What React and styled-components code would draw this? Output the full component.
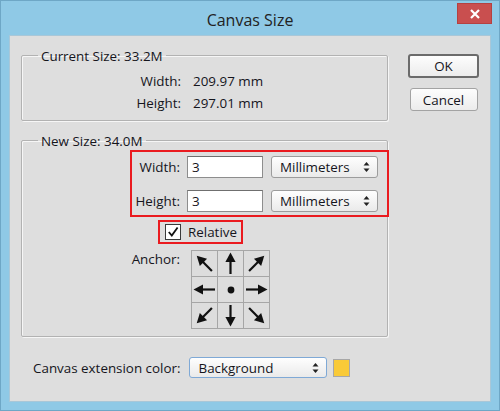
import React from 'react';
import styled, { createGlobalStyle } from 'styled-components';

const GlobalStyle = createGlobalStyle`
  html, body { margin: 0; padding: 0; }
  body {
    width: 500px;
    height: 411px;
    overflow: hidden;
    font-family: "Open Sans", "Noto Sans", sans-serif;
    font-size: 13.4px;
    color: #15151c;
  }
  * { box-sizing: border-box; }
`;

const Window = styled.div`
  width: 500px;
  height: 411px;
  background: #8fc9e6;
  border: 1px solid #6ea7c6;
  padding: 0 8px 8px;
  display: flex;
  flex-direction: column;
`;

const TitleBar = styled.div`
  height: 34px;
  display: grid;
  grid-template-columns: 1fr auto 1fr;
  align-items: start;
`;

const Title = styled.div`
  grid-column: 2;
  font-size: 16px;
  line-height: 20px;
  margin-top: 9px;
  color: #222;
`;

const CloseButton = styled.div`
  grid-column: 3;
  justify-self: end;
  margin: 2px -1px 0 0;
  width: 35px;
  height: 21px;
  background: #c94f4f;
  border: 1px solid #b54141;
  display: flex;
  align-items: center;
  justify-content: center;
`;

const Body = styled.div`
  flex: 1;
  background: #dedede;
  border: 1px solid #a9c7d8;
  display: flex;
  gap: 20px;
  padding: 9px 12px 0 11px;
`;

const LeftColumn = styled.div`
  width: 367px;
  display: flex;
  flex-direction: column;
  gap: 9px;
`;

const RightColumn = styled.div`
  width: 71px;
  display: flex;
  flex-direction: column;
  align-items: center;
  gap: 10px;
  padding-top: 9px;
`;

const Button = styled.button`
  font-family: inherit;
  font-size: 13.4px;
  color: #15151c;
  width: ${p => (p.$default ? 71 : 68)}px;
  height: ${p => (p.$default ? 24 : 23)}px;
  padding: 0;
  border-radius: 3px;
  border: ${p => (p.$default ? '2px solid #6b6b6b' : '1px solid #a3a3a3')};
  background: linear-gradient(#fdfdfd, #ececec);
  line-height: 18px;
`;

const Group = styled.fieldset`
  margin: 0;
  min-width: 0;
  border: 1px solid #b2b2b2;
  box-shadow: inset 1px 1px 0 #f6f6f6, 1px 1px 0 #f6f6f6;
  border-radius: 2px;
  padding: ${p => p.$pad};
`;

const Legend = styled.legend`
  margin-left: 16px;
  padding: 3px 3px 0;
  line-height: 17px;
`;

const InfoRow = styled.div`
  display: flex;
  height: 22px;
  align-items: center;
`;

const InfoLabel = styled.span`
  width: 159px;
  text-align: right;
`;

const InfoValue = styled.span`
  margin-left: 12px;
`;

const Highlight = styled.div`
  border: 2px solid #ea1a1f;
`;

const SizeBox = styled(Highlight)`
  margin-left: 108px;
  width: 259px;
  padding: 4px 8px 3px 2px;
  display: grid;
  grid-template-columns: 46px 76px 108px;
  column-gap: 7px;
  row-gap: 12px;
  align-items: center;

  & > :nth-child(3n) { margin-left: 1px; }
`;

const FieldLabel = styled.span`
  text-align: right;
`;

const TextField = styled.div`
  height: 22px;
  background: #fff;
  border: 1px solid #8d8d8d;
  border-top-color: #6f6f6f;
  padding-left: 4px;
  line-height: 20px;
`;

const Select = styled.div`
  width: ${p => p.$width || 'auto'};
  height: ${p => p.$height || '22px'};
  background: linear-gradient(#fefefe, #eaeaea);
  border: 1px solid ${p => (p.$focus ? '#7fa9d6' : '#9c9c9c')};
  border-radius: 3px;
  display: flex;
  align-items: center;
  justify-content: space-between;
  padding: 0 7px 0 ${p => p.$indent || '8px'};
`;

const RelativeBox = styled(Highlight)`
  margin: 3px 0 0 136px;
  width: 85px;
  height: 24px;
  display: flex;
  align-items: center;
  gap: 7px;
  padding-left: 5px;
`;

const Checkbox = styled.div`
  width: 16px;
  height: 16px;
  background: #fff;
  border: 1px solid #3a3a3a;
  display: flex;
  align-items: center;
  justify-content: center;
`;

const AnchorRow = styled.div`
  margin-top: 6px;
  display: flex;
  gap: 11px;
  align-items: flex-start;
`;

const AnchorLabel = styled.span`
  width: 158px;
  text-align: right;
  line-height: 18px;
`;

const AnchorGrid = styled.div`
  display: grid;
  grid-template-columns: repeat(3, 25px);
  grid-template-rows: repeat(3, 25px);
  gap: 1px;
  padding: 1px;
  background: #a6a6a6;
`;

const AnchorCell = styled.div`
  background: #dddddd;
  display: flex;
  align-items: center;
  justify-content: center;
`;

const ArrowIcon = styled.svg`
  transform: rotate(${p => p.$rot}deg);
`;

const ExtensionRow = styled.div`
  margin-top: 11px;
  padding-left: 12px;
  display: flex;
  align-items: center;
`;

const ExtensionLabel = styled.span`
  margin-right: 8px;
`;

const Swatch = styled.div`
  margin-left: 6px;
  width: 17px;
  height: 18px;
  background: #f9ca38;
  border: 1px solid #a7a7a7;
`;

const Spinner = () => (
  <svg width="7" height="10" viewBox="0 0 7 10">
    <polygon points="3.5,0 6.5,3.6 0.5,3.6" fill="#222" />
    <polygon points="0.5,6.4 6.5,6.4 3.5,10" fill="#222" />
  </svg>
);

// one arrow pointing up, turned for each anchor direction
const Arrow = ({ rot }) => (
  <ArrowIcon $rot={rot} width="25" height="25" viewBox="0 0 25 25">
    <rect x="11.4" y="9" width="2.2" height="14" fill="#111" />
    <polygon points="12.5,1.5 17.6,11 7.4,11" fill="#111" />
  </ArrowIcon>
);

const anchors = [-45, 0, 45, -90, null, 90, -135, 180, 135];

export default function App() {
  return (
    <>
      <GlobalStyle />
      <Window>
        <TitleBar>
          <Title>Canvas Size</Title>
          <CloseButton>
            <svg width="10" height="10" viewBox="0 0 10 10">
              <path d="M1 1L9 9M9 1L1 9" stroke="#fff" strokeWidth="2.2" />
            </svg>
          </CloseButton>
        </TitleBar>
        <Body>
          <LeftColumn>
            <Group $pad="5px 0 6px">
              <Legend>Current Size: 33.2M</Legend>
              <InfoRow>
                <InfoLabel>Width:</InfoLabel>
                <InfoValue>209.97 mm</InfoValue>
              </InfoRow>
              <InfoRow>
                <InfoLabel>Height:</InfoLabel>
                <InfoValue>297.01 mm</InfoValue>
              </InfoRow>
            </Group>

            <Group $pad="0 0 7px">
              <Legend>New Size: 34.0M</Legend>
              <SizeBox>
                <FieldLabel>Width:</FieldLabel>
                <TextField>3</TextField>
                <Select>
                  Millimeters <Spinner />
                </Select>
                <FieldLabel>Height:</FieldLabel>
                <TextField>3</TextField>
                <Select>
                  Millimeters <Spinner />
                </Select>
              </SizeBox>
              <RelativeBox>
                <Checkbox>
                  <svg width="12" height="12" viewBox="0 0 12 12">
                    <path d="M1.8 6L4.8 9.6L10.6 1.4" stroke="#111" strokeWidth="1.8" fill="none" />
                  </svg>
                </Checkbox>
                Relative
              </RelativeBox>
              <AnchorRow>
                <AnchorLabel>Anchor:</AnchorLabel>
                <AnchorGrid>
                  {anchors.map((rot, i) => (
                    <AnchorCell key={i}>
                      {rot === null ? (
                        <svg width="8" height="8" viewBox="0 0 8 8">
                          <circle cx="4" cy="4" r="3.4" fill="#111" />
                        </svg>
                      ) : (
                        <Arrow rot={rot} />
                      )}
                    </AnchorCell>
                  ))}
                </AnchorGrid>
              </AnchorRow>
            </Group>

            <ExtensionRow>
              <ExtensionLabel>Canvas extension color:</ExtensionLabel>
              <Select $width="138px" $height="21px" $focus $indent="9px">
                Background <Spinner />
              </Select>
              <Swatch />
            </ExtensionRow>
          </LeftColumn>

          <RightColumn>
            <Button $default>OK</Button>
            <Button>Cancel</Button>
          </RightColumn>
        </Body>
      </Window>
    </>
  );
}
